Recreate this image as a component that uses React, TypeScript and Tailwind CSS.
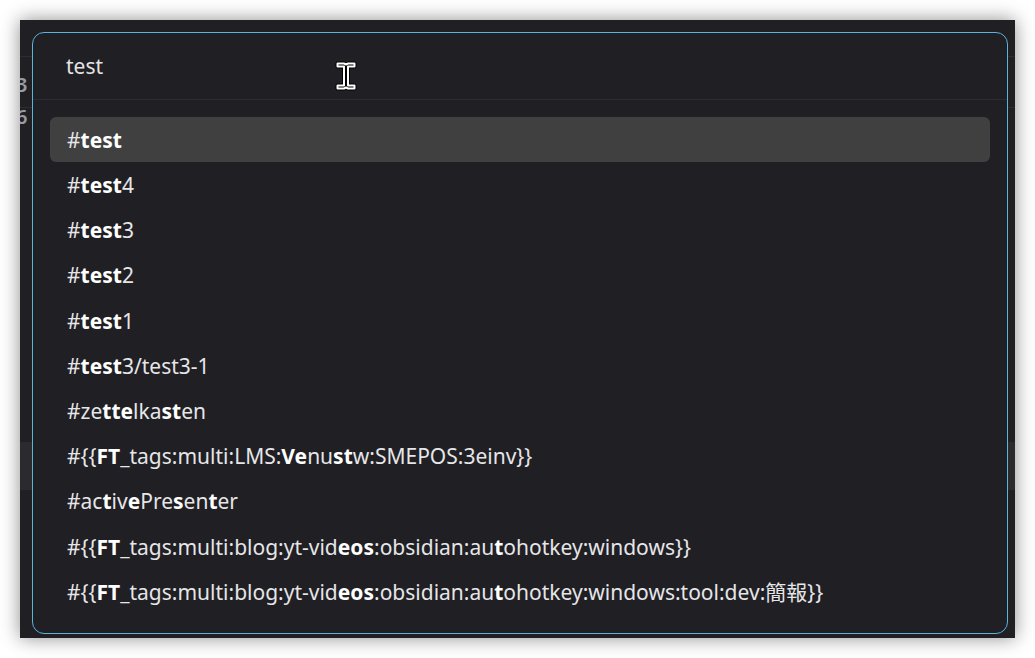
import React from "react";

type Seg = [string, boolean];

const rows: Seg[][] = [
  [["#", false], ["test", true]],
  [["#", false], ["test", true], ["4", false]],
  [["#", false], ["test", true], ["3", false]],
  [["#", false], ["test", true], ["2", false]],
  [["#", false], ["test", true], ["1", false]],
  [["#", false], ["test", true], ["3/test3-1", false]],
  [["#ze", false], ["tte", true], ["lka", false], ["st", true], ["en", false]],
  [
    ["#{{", false],
    ["FT", true],
    ["_tags:multi:LMS:", false],
    ["Ve", true],
    ["nu", false],
    ["st", true],
    ["w:SMEPOS:3einv}}", false],
  ],
  [
    ["#ac", false],
    ["t", true],
    ["iv", false],
    ["e", true],
    ["Pre", false],
    ["s", true],
    ["en", false],
    ["t", true],
    ["er", false],
  ],
  [
    ["#{{", false],
    ["FT", true],
    ["_tags:multi:blog:yt-vid", false],
    ["eos", true],
    [":obsidian:au", false],
    ["t", true],
    ["ohotkey:windows}}", false],
  ],
  [
    ["#{{", false],
    ["FT", true],
    ["_tags:multi:blog:yt-vid", false],
    ["eos", true],
    [":obsidian:au", false],
    ["t", true],
    ["ohotkey:windows:tool:dev:簡報}}", false],
  ],
];

const font = {
  fontFamily: '"Noto Sans", "Noto Sans CJK TC", sans-serif',
};

export default function App() {
  return (
    <div className="w-[1035px] h-[658px] bg-white p-[20px]" style={font}>
      <div className="relative w-[995px] h-[618px] bg-[#1f1f24] overflow-hidden shadow-[0_0_18px_rgba(0,0,0,0.45)]">
        {/* background app content */}
        <div className="flex flex-col w-full h-full text-[#9a9aa0]">
          <div className="h-[37px] border-b border-[#2c2c32]" />
          <div className="h-[51px] border-b border-[#2c2c32] flex items-center pt-[6px]">
            <span className="ml-[-4px] text-[20px] font-semibold leading-none">3</span>
          </div>
          <div className="h-[18px] flex items-center">
            <span className="ml-[-4px] text-[20px] font-semibold leading-none">6</span>
          </div>
          <div className="h-[316px]" />
          <div className="h-[48px] bg-[#2a2a2f]" />
        </div>

        {/* modal */}
        <div className="absolute left-[12px] top-[12px] w-[976px] h-[602px] rounded-[12px] border-[1.5px] border-[#5ab4dc] bg-[#1f1f24] flex flex-col">
          <div className="h-[67px] border-b border-[#2c2c32] flex items-center pl-[33px] pt-[2px] text-[21px] text-[#e4e4e6]">
            test
          </div>
          <div className="flex flex-col px-[17px] pt-[17px]">
            {rows.map((r, i) => (
              <div
                key={i}
                className={
                  "h-[45.2px] flex items-center px-[17px] pt-[2px] rounded-[6px] text-[21px] whitespace-pre " +
                  (i === 0 ? "bg-[#404040]" : "")
                }
              >
                {r.map(([t, b], j) => (
                  <span
                    key={j}
                    className={b ? "font-bold text-white" : "text-[#e6e6e8]"}
                  >
                    {t}
                  </span>
                ))}
              </div>
            ))}
          </div>

          {/* I-beam mouse cursor */}
          <svg
            className="absolute left-[302px] top-[28px]"
            width="22"
            height="30"
            viewBox="0 0 22 30"
          >
            <path
              d="M2.5 2.5 H9 L11 3.5 L13 2.5 H19.5 V5.5 H13 V24.5 H19.5 V27.5 H13 L11 26.5 L9 27.5 H2.5 V24.5 H9 V5.5 H2.5 Z"
              fill="black"
              stroke="black"
              strokeWidth="4"
              strokeLinejoin="round"
            />
            <path
              d="M2.5 2.5 H9 L11 3.5 L13 2.5 H19.5 V5.5 H13 V24.5 H19.5 V27.5 H13 L11 26.5 L9 27.5 H2.5 V24.5 H9 V5.5 H2.5 Z"
              fill="black"
              stroke="white"
              strokeWidth="2"
              strokeLinejoin="round"
            />
          </svg>
        </div>
      </div>
    </div>
  );
}
